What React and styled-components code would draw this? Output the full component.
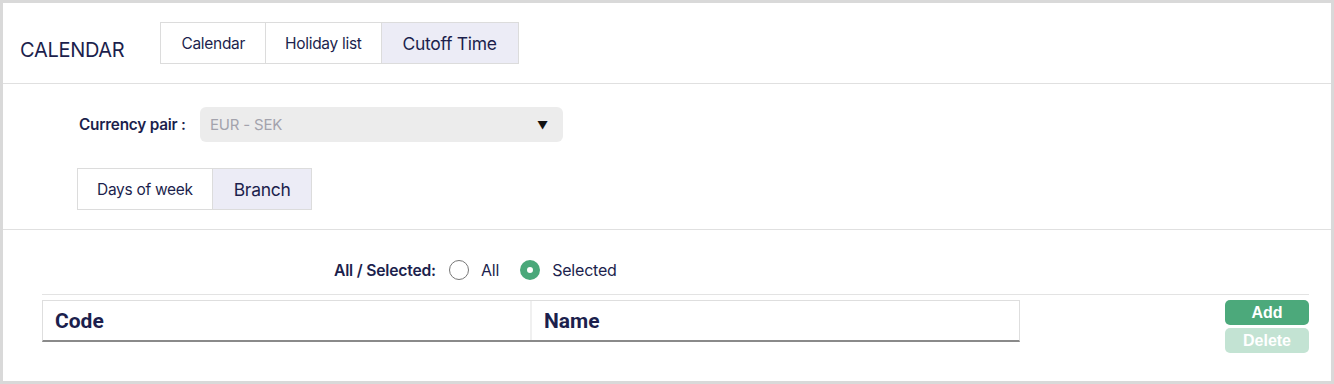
import React, { useState } from "react";
import styled, { createGlobalStyle } from "styled-components";

const GlobalStyle = createGlobalStyle`
  body {
    margin: 0;
    font-family: Inter, "Noto Sans", sans-serif;
    color: #1c1f4d;
  }
`;

const Frame = styled.div`
  width: 1334px;
  height: 384px;
  box-sizing: border-box;
  border: 3px solid #d9d9d9;
  background: #fff;
`;

const Header = styled.div`
  display: flex;
  align-items: center;
  height: 80px;
  padding-left: 17px;
  border-bottom: 1px solid #e0e0e0;
`;

const Title = styled.h1`
  margin: 13px 36px 0 0;
  font-size: 20px;
  font-weight: 400;
  letter-spacing: -0.3px;
`;

const Tabs = styled.div`
  display: flex;
  border: 1px solid #dcdcdc;
`;

const SubTabs = styled(Tabs)`
  display: inline-flex;
`;

const Tab = styled.button`
  height: 40px;
  padding: 0 ${({ $pad }) => $pad}px;
  border: none;
  border-left: 1px solid #dcdcdc;
  background: ${({ $active }) => ($active ? "#ececf6" : "#fff")};
  color: #1c1f4d;
  font-family: Inter, sans-serif;
  font-size: ${({ $active }) => ($active ? "17.5px" : "15.5px")};
  letter-spacing: -0.3px;
  cursor: pointer;

  &:first-child {
    border-left: none;
  }
`;

const Options = styled.div`
  padding: 23px 0 19px 74px;
  border-bottom: 1px solid #e0e0e0;
`;

const FieldRow = styled.div`
  display: flex;
  align-items: center;
  margin-bottom: 26px;
`;

const Label = styled.label`
  width: 123px;
  padding-left: 2px;
  box-sizing: border-box;
  font-size: 15.3px;
  font-weight: 600;
  letter-spacing: -0.2px;
`;

const Select = styled.div`
  display: flex;
  align-items: center;
  justify-content: space-between;
  width: 363px;
  height: 35px;
  box-sizing: border-box;
  padding: 0 15px 0 10px;
  border-radius: 6px;
  background: #ececec;
  color: #a3a3ad;
  font-size: 15px;
  letter-spacing: -0.2px;
`;

const Caret = styled.span`
  color: #111;
  font-size: 11px;
`;

const Content = styled.div`
  padding: 30px 22px 0 39px;
`;

const RadioRow = styled.div`
  display: flex;
  align-items: center;
  padding: 0 0 14px 292px;
  border-bottom: 1px solid #e3e3e3;
`;

const RadioLabel = styled.span`
  font-size: 15.7px;
  font-weight: 600;
  margin-right: 13px;
  letter-spacing: -0.2px;
`;

const RadioOption = styled.label`
  display: flex;
  align-items: center;
  gap: 12px;
  margin-right: 21px;
  font-size: 16px;
  letter-spacing: -0.2px;
  cursor: pointer;
`;

const Dot = styled.span`
  width: 20px;
  height: 20px;
  box-sizing: border-box;
  border-radius: 50%;
  border: ${({ $on }) => ($on ? "7px solid #4aa87a" : "1.5px solid #777")};
  background: #fff;
`;

const Body = styled.div`
  display: flex;
  align-items: flex-start;
  justify-content: space-between;
  padding-top: 5px;
`;

const Table = styled.table`
  width: 978px;
  border-collapse: separate;
  border-spacing: 0;
  border: 1px solid #dedede;
  border-bottom: 2px solid #8a8a8a;
`;

const Th = styled.th`
  box-sizing: border-box;
  height: 39px;
  padding: 0 12px;
  text-align: left;
  font-family: Roboto, "Liberation Sans", sans-serif;
  font-size: 21px;
  font-weight: 700;
  color: #1c1f4d;
  width: ${({ $w }) => $w || "auto"};

  & + & {
    border-left: 2px solid #f0f0f0;
  }
`;

const Buttons = styled.div`
  display: flex;
  flex-direction: column;
  gap: 3px;
`;

const Button = styled.button`
  width: 84px;
  height: 25px;
  border: none;
  border-radius: 5px;
  background: ${({ $disabled }) => ($disabled ? "#c3e3d3" : "#4ca97b")};
  color: #fff;
  font-family: "Liberation Sans", Arial, sans-serif;
  font-size: 16px;
  font-weight: 700;
  cursor: ${({ $disabled }) => ($disabled ? "default" : "pointer")};
`;

export default function App() {
  const [tab, setTab] = useState("cutoff");
  const [sub, setSub] = useState("branch");
  const [mode, setMode] = useState("selected");

  return (
    <>
      <GlobalStyle />
      <Frame>
        <Header>
          <Title>CALENDAR</Title>
          <Tabs>
            <Tab $pad={20} $active={tab === "calendar"} onClick={() => setTab("calendar")}>
              Calendar
            </Tab>
            <Tab $pad={19} $active={tab === "holiday"} onClick={() => setTab("holiday")}>
              Holiday list
            </Tab>
            <Tab $pad={21} $active={tab === "cutoff"} onClick={() => setTab("cutoff")}>
              Cutoff Time
            </Tab>
          </Tabs>
        </Header>

        <Options>
          <FieldRow>
            <Label>Currency pair :</Label>
            <Select>
              EUR - SEK
              <Caret>▼</Caret>
            </Select>
          </FieldRow>
          <SubTabs>
            <Tab $pad={19} $active={sub === "days"} onClick={() => setSub("days")}>
              Days of week
            </Tab>
            <Tab $pad={21} $active={sub === "branch"} onClick={() => setSub("branch")}>
              Branch
            </Tab>
          </SubTabs>
        </Options>

        <Content>
          <RadioRow>
            <RadioLabel>All / Selected:</RadioLabel>
            <RadioOption onClick={() => setMode("all")}>
              <Dot $on={mode === "all"} />
              All
            </RadioOption>
            <RadioOption onClick={() => setMode("selected")}>
              <Dot $on={mode === "selected"} />
              Selected
            </RadioOption>
          </RadioRow>

          <Body>
            <Table>
              <thead>
                <tr>
                  <Th $w="487px">Code</Th>
                  <Th>Name</Th>
                </tr>
              </thead>
            </Table>
            <Buttons>
              <Button>Add</Button>
              <Button $disabled>Delete</Button>
            </Buttons>
          </Body>
        </Content>
      </Frame>
    </>
  );
}
